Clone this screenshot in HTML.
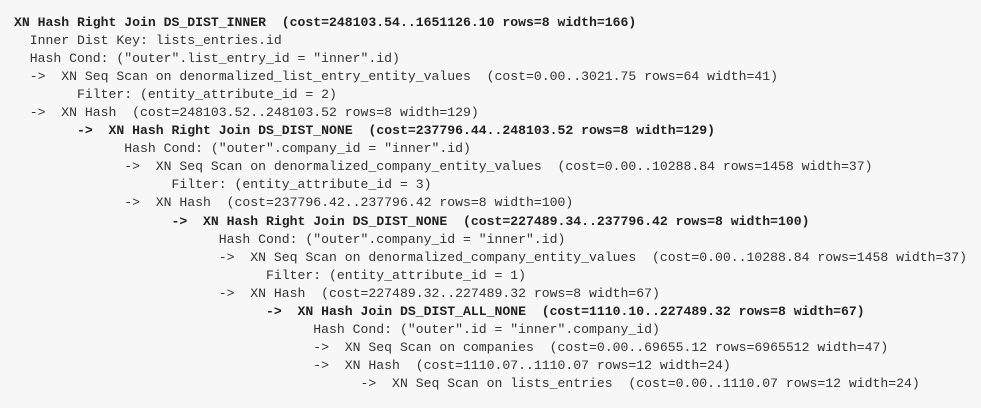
<!DOCTYPE html>
<html><head><meta charset="utf-8"><style>
html,body{margin:0;padding:0;width:981px;height:408px;overflow:hidden;background:#f7f7f7;}
pre{margin:0;position:absolute;left:14px;top:14px;font-family:"Liberation Mono",monospace;font-size:13.14px;line-height:18.05px;color:#333;}
b{font-weight:bold;color:#222;}
</style></head><body>
<pre><b>XN Hash Right Join DS_DIST_INNER  (cost=248103.54..1651126.10 rows=8 width=166)</b>
  Inner Dist Key: lists_entries.id
  Hash Cond: ("outer".list_entry_id = "inner".id)
  ->  XN Seq Scan on denormalized_list_entry_entity_values  (cost=0.00..3021.75 rows=64 width=41)
        Filter: (entity_attribute_id = 2)
  ->  XN Hash  (cost=248103.52..248103.52 rows=8 width=129)
        <b>->  XN Hash Right Join DS_DIST_NONE  (cost=237796.44..248103.52 rows=8 width=129)</b>
              Hash Cond: ("outer".company_id = "inner".id)
              ->  XN Seq Scan on denormalized_company_entity_values  (cost=0.00..10288.84 rows=1458 width=37)
                    Filter: (entity_attribute_id = 3)
              ->  XN Hash  (cost=237796.42..237796.42 rows=8 width=100)
                    <b>->  XN Hash Right Join DS_DIST_NONE  (cost=227489.34..237796.42 rows=8 width=100)</b>
                          Hash Cond: ("outer".company_id = "inner".id)
                          ->  XN Seq Scan on denormalized_company_entity_values  (cost=0.00..10288.84 rows=1458 width=37)
                                Filter: (entity_attribute_id = 1)
                          ->  XN Hash  (cost=227489.32..227489.32 rows=8 width=67)
                                <b>->  XN Hash Join DS_DIST_ALL_NONE  (cost=1110.10..227489.32 rows=8 width=67)</b>
                                      Hash Cond: ("outer".id = "inner".company_id)
                                      ->  XN Seq Scan on companies  (cost=0.00..69655.12 rows=6965512 width=47)
                                      ->  XN Hash  (cost=1110.07..1110.07 rows=12 width=24)
                                            ->  XN Seq Scan on lists_entries  (cost=0.00..1110.07 rows=12 width=24)</pre>
</body></html>
